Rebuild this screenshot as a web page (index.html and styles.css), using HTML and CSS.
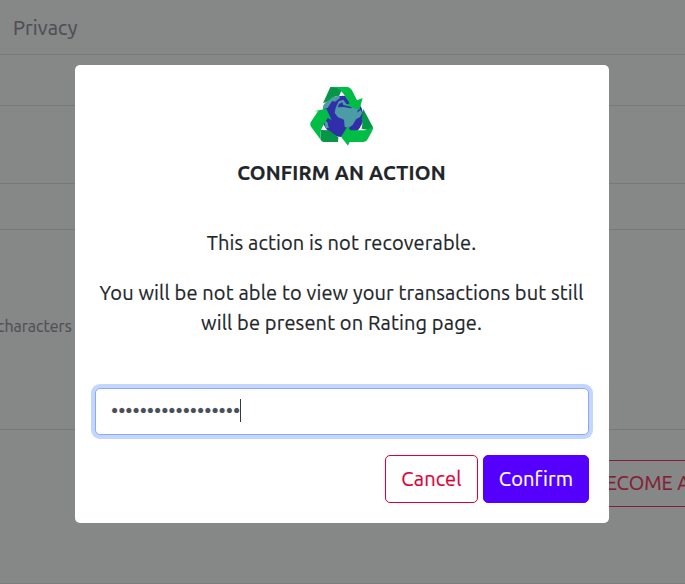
FILE: index.html
```html
<!DOCTYPE html>
<html lang="en">
<head>
<meta charset="utf-8">
<title>Confirm an action</title>
<link rel="stylesheet" href="styles.css">
</head>
<body>
<div class="page">
  <div class="row row-tab"><span class="tab">Privacy</span></div>
  <div class="row row-a"></div>
  <div class="row row-b"></div>
  <div class="row row-c"></div>
  <div class="row row-field"><span class="hint">characters</span></div>
  <div class="row-action"><button class="become">BECOME A</button></div>
</div>
<div class="overlay">
  <div class="modal" role="dialog">
    <svg class="logo" viewBox="30 24 192 180">
      <circle cx="128" cy="115" r="62" fill="#302fa9"/>
      <path fill="#4b9ca5" d="M70 82Q84 58 117 53L120 60L105 71L97 69L89 80L83 90L68 94Z"/>
      <path fill="#4b9ca5" d="M116 70L130 65L139 78L157 80L175 93L171 104L182 96L187 105L180 117L168 124L158 141L144 151L134 146L132 125L114 118L104 105L107 89Z"/>
      <path fill="#4b9ca5" d="M72 123L83 134L86 150L77 151Z"/>
      <path fill="#302fa9" d="M117 78L127 73L130 81L143 84L157 88L151 91L132 87L113 88Z"/>
      <path fill="#059747" d="M91 27L128 28L118 53Q97 55 83 70L69 76Z"/>
      <path fill="#059747" d="M190 93L218 146Q221 154 215 158L185 152Q189 136 185 124Z"/>
      <path fill="#059747" d="M62 156L87 157L115 178L114 192L70 192Q60 189 61 178Z"/>
      <path fill="#00bd45" d="M99 27L144 27Q151 29 156 37L171 67L188 60L178 96L137 81L149 76L136 56Q119 28 99 27Z"/>
      <path fill="#00bd45" d="M42 100L79 92L95 126L83 120L65 151Q59 164 61 184L32 145Q29 138 33 131L54 100Z"/>
      <path fill="#00bd45" d="M143 145L151 157L191 157Q207 157 218 144Q219 153 215 162L201 187Q197 192 189 192L149 192L144 203L123 176Z"/>
    </svg>
    <h1 class="title">CONFIRM AN ACTION</h1>
    <div class="message">
      <p>This action is not recoverable.</p>
      <p>You will be not able to view your transactions but still<br>will be present on Rating page.</p>
    </div>
    <div class="password"><span class="dots">••••••••••••••••••</span><span class="caret"></span></div>
    <div class="buttons">
      <button class="btn cancel">Cancel</button>
      <button class="btn confirm">Confirm</button>
    </div>
  </div>
</div>
</body>
</html>
```
FILE: styles.css
```css
* { box-sizing: border-box; }
body {
  margin: 0;
  height: 584px;
  overflow: hidden;
  background: #868887;
  color: #212529;
  font-family: Ubuntu, "Noto Sans", sans-serif;
  font-size: 20px;
  line-height: 30px;
  -webkit-text-stroke: 0.2px currentColor;
}
button { font: inherit; letter-spacing: inherit; }
.page { height: 584px; overflow: hidden; border-bottom: 1px solid #7c7e7d; }
.row { border-bottom: 1px solid #777978; }
.row-tab { height: 55px; padding: 13px 13px 0; color: #4c4f54; }
.tab { letter-spacing: 0.14px; }
.row-a { height: 51px; }
.row-b { height: 78px; }
.row-c { height: 46px; }
.row-field { height: 200px; padding-top: 81px; }
.hint { display: block; margin-left: -3px; font-size: 16px; color: #4f5255; }
.row-action { padding: 30px 0 0 577px; }
.become {
  width: 150px;
  height: 47px;
  padding: 0 0 2px 15px;
  text-align: left;
  white-space: nowrap;
  background: none;
  border: 1px solid #821f38;
  border-radius: 5px;
  color: #821f38;
}
.overlay { position: absolute; inset: 0; padding: 65px 76px 0 75px; letter-spacing: 0.14px; }
.modal {
  height: 458px;
  padding: 21px 20px 0;
  background: #fff;
  border-radius: 5px;
  display: flex;
  flex-direction: column;
}
.logo { width: 64px; height: 60px; align-self: center; flex: none; }
.title { margin: 12px 0 0; font-size: 20px; line-height: 30px; font-weight: 700; letter-spacing: 0.2px; text-align: center; padding-right: 1px; }
.message { margin-top: 40px; padding-right: 1px; text-align: center; white-space: nowrap; }
.message p { margin: 0 0 20px; }
.password {
  display: flex;
  align-items: center;
  height: 47px;
  margin-top: 30px;
  padding: 0 15px 2px;
  background: #fff;
  border: 1px solid #8fa7fb;
  border-radius: 5px;
  box-shadow: 0 0 0 4px #c2d6ff;
  color: #495057;
}
.dots { letter-spacing: -0.03px; }
.caret { width: 1px; height: 23px; background: #343a40; }
.buttons { display: flex; justify-content: flex-end; gap: 5px; margin-top: 20px; }
.btn { height: 48px; padding: 0; border-radius: 5px; border: 1px solid #dc0037; }
.cancel { width: 93px; background: #fff; color: #dc0037; }
.confirm { width: 106px; background: #5500ff; border-color: #5500ff; color: #fff; }
```
